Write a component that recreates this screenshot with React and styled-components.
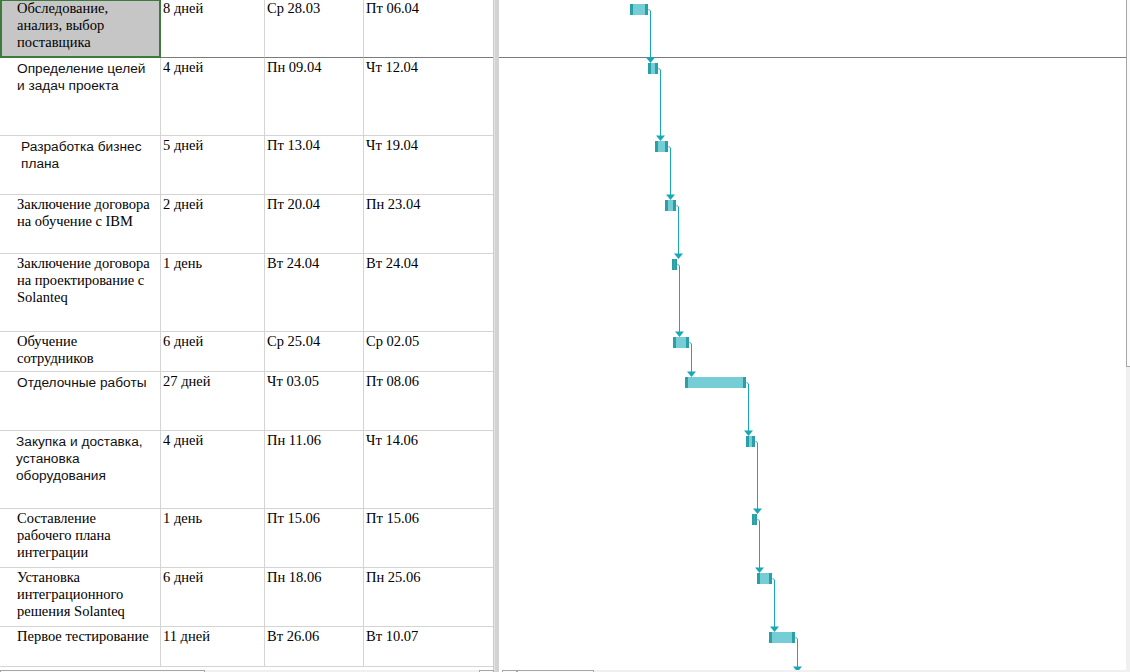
import React from 'react'
import styled, { createGlobalStyle } from 'styled-components'

const GlobalStyle = createGlobalStyle`
  html, body {
    margin: 0;
    padding: 0;
    background: #ffffff;
  }
  body {
    font-family: 'Liberation Serif', 'Times New Roman', serif;
    color: #000;
  }
`

const CHART_LEFT = 499
const BAR_DARK = '#2a9fa6'
const BAR_LIGHT = '#75cdd5'
const LINK = '#17a8b6'

const tasks = [
  { name: ['Обследование,', 'анализ, выбор', 'поставщика'], dur: '8 дней', start: 'Ср 28.03', finish: 'Пт 06.04', h: 59, x: 630, w: 18, selected: true },
  { name: ['Определение целей', 'и задач проекта'], sans: true, dur: '4 дней', start: 'Пн 09.04', finish: 'Чт 12.04', h: 78, x: 648, w: 10 },
  { name: ['Разработка бизнес', 'плана'], sans: true, indent: 21, dur: '5 дней', start: 'Пт 13.04', finish: 'Чт 19.04', h: 59, x: 655, w: 13 },
  { name: ['Заключение договора', 'на обучение с IBM'], dur: '2 дней', start: 'Пт 20.04', finish: 'Пн 23.04', h: 59, x: 665, w: 11 },
  { name: ['Заключение договора', 'на проектирование с', 'Solanteq'], dur: '1 день', start: 'Вт 24.04', finish: 'Вт 24.04', h: 78, x: 672, w: 5 },
  { name: ['Обучение', 'сотрудников'], dur: '6 дней', start: 'Ср 25.04', finish: 'Ср 02.05', h: 40, x: 673, w: 16 },
  { name: ['Отделочные работы'], sans: true, dur: '27 дней', start: 'Чт 03.05', finish: 'Пт 08.06', h: 59, x: 685, w: 61 },
  { name: ['Закупка и доставка,', 'установка', 'оборудования'], sans: true, indent: 16, dur: '4 дней', start: 'Пн 11.06', finish: 'Чт 14.06', h: 78, x: 746, w: 9 },
  { name: ['Составление', 'рабочего плана', 'интеграции'], dur: '1 день', start: 'Пт 15.06', finish: 'Пт 15.06', h: 59, x: 752, w: 5 },
  { name: ['Установка', 'интеграционного', 'решения Solanteq'], dur: '6 дней', start: 'Пн 18.06', finish: 'Пн 25.06', h: 59, x: 757, w: 15 },
  { name: ['Первое тестирование'], dur: '11 дней', start: 'Вт 26.06', finish: 'Вт 10.07', h: 40, x: 769, w: 26 },
]

const Window = styled.div`
  width: 1130px;
  height: 672px;
  overflow: hidden;
  display: flex;
  flex-direction: column;
  background: #fff;
`

const Main = styled.div`
  display: flex;
  height: 670px;
  flex: none;
  overflow: hidden;
`

const TablePane = styled.div`
  width: 494px;
  flex: none;
  box-sizing: border-box;
  border-right: 1px solid #cdcdcd;
  overflow: hidden;
`

const Rows = styled.div`
  margin-top: -1px;
`

const Row = styled.div`
  display: flex;
  height: ${({ $h }) => $h}px;
`

const Cell = styled.div`
  box-sizing: border-box;
  height: 100%;
  width: ${({ $w }) => ($w ? `${$w}px` : 'auto')};
  flex: ${({ $w }) => ($w ? 'none' : '1')};
  padding: 1px 0 0 2px;
  border-bottom: 1px solid ${({ $dark }) => ($dark ? '#7a7a7a' : '#d4d4d4')};
  border-right: ${({ $last }) => ($last ? 'none' : '1px solid #d4d4d4')};
  font-family: 'Liberation Serif', 'Times New Roman', serif;
  font-size: 14.5px;
  line-height: 17px;
  white-space: nowrap;
`

const NameCell = styled(Cell)`
  padding-left: ${({ $indent }) => $indent}px;
  padding-top: ${({ $sans }) => ($sans ? '2px' : '1px')};
  font-family: ${({ $sans }) =>
    $sans ? "'Liberation Sans', Arial, sans-serif" : "'Liberation Serif', 'Times New Roman', serif"};
  font-size: ${({ $sans }) => ($sans ? '13.7px' : '14.5px')};
  color: ${({ $sans }) => ($sans ? '#111' : '#000')};
  background: ${({ $selected }) => ($selected ? '#c6c6c6' : 'transparent')};
  outline: ${({ $selected }) => ($selected ? '2px solid #3d7b3d' : 'none')};
  outline-offset: -2px;
`

const Splitter = styled.div`
  width: 5px;
  flex: none;
  box-sizing: border-box;
  background: #d3d3d3;
  border-left: 1px solid #e2e2e2;
`

const ChartPane = styled.div`
  flex: 1;
  overflow: hidden;
  background: #fff;
`

const VScroll = styled.div`
  width: 4px;
  flex: none;
  display: flex;
  flex-direction: column;
  background: #f0f0f0;
`

const VThumb = styled.div`
  height: 367px;
  box-sizing: border-box;
  border-left: 1px solid #a6a6a6;
  border-bottom: 1px solid #a6a6a6;
  background: #fbfbfb;
`

const ScrollRow = styled.div`
  display: flex;
  height: 17px;
  flex: none;
`

const HScroll = styled.div`
  display: flex;
  width: ${({ $w }) => ($w ? `${$w}px` : 'auto')};
  flex: ${({ $w }) => ($w ? 'none' : '1')};
  padding-left: ${({ $pad }) => $pad || 0}px;
  box-sizing: border-box;
  background: #fff;
`

const Track = styled.div`
  flex: 1;
  background: #f0f0f0;
`

const Box = styled.div`
  width: ${({ $w }) => $w}px;
  flex: none;
  box-sizing: border-box;
  border: 1px solid #a6a6a6;
  background: #fafafa;
`

function Bar({ x, y, w }) {
  const cap = Math.min(3, w / 2)
  return (
    <g>
      <rect x={x} y={y} width={w} height={11} fill={BAR_LIGHT} />
      <rect x={x} y={y} width={cap} height={11} fill={BAR_DARK} />
      <rect x={x + w - cap} y={y} width={cap} height={11} fill={BAR_DARK} />
    </g>
  )
}

function Link({ fromX, fromY, toY }) {
  const lx = fromX + 2
  return (
    <g>
      <path
        d={`M${fromX} ${fromY + 5} L${lx} ${fromY + 7} L${lx} ${toY - 5}`}
        stroke={LINK}
        strokeWidth="1"
        fill="none"
      />
      <polygon points={`${lx - 4.5},${toY - 5.5} ${lx + 4.5},${toY - 5.5} ${lx},${toY}`} fill={LINK} />
    </g>
  )
}

function Gantt() {
  let top = -1
  const bars = tasks.map(t => {
    const b = { x: t.x - CHART_LEFT + 0.5, w: t.w, y: top + 5 }
    top += t.h
    return b
  })
  const nextY = top + 5

  return (
    <svg width="627" height="670" style={{ display: 'block' }}>
      <line x1="0" x2="627" y1="57.5" y2="57.5" stroke="#7a7a7a" strokeWidth="1" />
      {bars.map((b, i) => (
        <Link
          key={`l${i}`}
          fromX={b.x + b.w}
          fromY={b.y}
          toY={i < bars.length - 1 ? bars[i + 1].y : nextY}
        />
      ))}
      {bars.map((b, i) => (
        <Bar key={`b${i}`} x={b.x - 0.5} y={b.y} w={b.w} />
      ))}
    </svg>
  )
}

export default function App() {
  return (
    <Window>
      <GlobalStyle />
      <Main>
        <TablePane>
          <Rows>
            {tasks.map((t, i) => (
              <Row key={i} $h={t.h}>
                <NameCell
                  $w={161}
                  $indent={t.indent || 17}
                  $sans={t.sans}
                  $selected={t.selected}
                  $dark={i === 0}
                >
                  {t.name.map((line, j) => (
                    <div key={j}>{line}</div>
                  ))}
                </NameCell>
                <Cell $w={104} $dark={i === 0}>{t.dur}</Cell>
                <Cell $w={99} $dark={i === 0}>{t.start}</Cell>
                <Cell $last $dark={i === 0}>{t.finish}</Cell>
              </Row>
            ))}
          </Rows>
        </TablePane>
        <Splitter />
        <ChartPane>
          <Gantt />
        </ChartPane>
        <VScroll>
          <VThumb />
          <Track />
        </VScroll>
      </Main>
      <ScrollRow>
        <HScroll $w={494}>
          <Box $w={205} />
          <Track />
          <Box $w={15} />
        </HScroll>
        <Splitter />
        <HScroll $pad={3}>
          <Box $w={15} />
          <Box $w={77} />
          <Track />
        </HScroll>
        <VScroll />
      </ScrollRow>
    </Window>
  )
}
